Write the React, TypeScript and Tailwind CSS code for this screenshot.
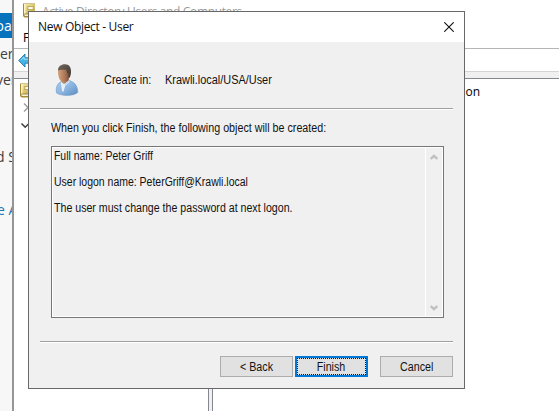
import type { ReactNode } from "react";

const dialogFont = "font-['Liberation_Sans',Arial,sans-serif]";
const systemFont = "font-['Open_Sans','Noto_Sans',sans-serif]";

function BookIcon() {
  return (
    <svg width="12" height="15" viewBox="0 0 12 15" className="shrink-0">
      <defs>
        <linearGradient id="cover" x1="0" x2="1" y1="0" y2="1">
          <stop offset="0" stopColor="#f6ebab" />
          <stop offset="1" stopColor="#c3a743" />
        </linearGradient>
      </defs>
      <path d="M0 .5H12V14.500H1.500L0 13Z" fill="#a58a35" />
      <rect x="1" y="1" width="11" height="9.500" fill="url(#cover)" />
      <rect x="1" y="1" width="1.500" height="9.500" fill="#fbf4c4" />
      <rect x="4.500" y="3" width="6" height="4" fill="#b2983f" />
      <rect x="5.300" y="3.800" width="4.500" height="2.400" fill="#fffdf0" />
      <path d="M1 11.500H10.500V13H2Z" fill="#f5f0dc" />
    </svg>
  );
}

function PersonIcon() {
  return (
    <svg width="26" height="34" viewBox="0 0 26 34" className="shrink-0">
      <defs>
        <linearGradient id="shirt" x1="0" x2="1" y1="0" y2="1">
          <stop offset="0" stopColor="#a9cbec" />
          <stop offset=".5" stopColor="#8db6e0" />
          <stop offset="1" stopColor="#5a8cc0" />
        </linearGradient>
        <linearGradient id="skin" x1="0" x2="1">
          <stop offset="0" stopColor="#d6a27b" />
          <stop offset=".6" stopColor="#a87353" />
          <stop offset="1" stopColor="#70452e" />
        </linearGradient>
        <linearGradient id="hair" x1="0" x2="1" y1="0" y2="1">
          <stop offset="0" stopColor="#75685c" />
          <stop offset="1" stopColor="#3a3430" />
        </linearGradient>
      </defs>
      <path d="M2.500 30C1.800 26 2.500 21 6.500 19L9 17.500H15.500L19.500 19.500C22.800 21.800 24 27 23.700 29.500C20 33 8 33.500 2.500 30Z" fill="url(#shirt)" stroke="#6c98c6" strokeWidth=".6" />
      <path d="M6.800 19.200L8 28L9.300 29L11.500 22L9.500 18Z" fill="#e6f0fa" />
      <path d="M7 15H14.500L15 18L10 21L7 19Z" fill="url(#skin)" />
      <path d="M14.800 17L16 18.800L12 22.500L10.300 21Z" fill="#c5dcf2" />
      <path d="M4.200 6C3.600 10 4.300 17 8 18.500C12.500 19.300 15.500 15.500 16.200 11L15.500 5Z" fill="url(#skin)" />
      <path d="M4 7.500C4 3.500 7 1.300 11 1.300C15.300 1.300 17.300 4.500 17 9.500C16.600 13 15.800 15 14.800 15L14.300 10.500C12.500 10.500 12.800 7.500 12 6.500C9.500 7.500 6.500 6 4 7.500Z" fill="url(#hair)" />
    </svg>
  );
}

function ScrollArrow({ down = false }: { down?: boolean }) {
  return (
    <svg width="8" height="7" viewBox="0 0 8 7" className={down ? "rotate-180" : ""}>
      <path d="M.7 5L4 1.900L7.300 5" fill="none" stroke="#bfbfbf" strokeWidth="2.400" />
    </svg>
  );
}

function DialogButton({ children, focused = false }: { children: ReactNode; focused?: boolean }) {
  return (
    <button
      className={`flex h-[21px] w-[73px] items-center justify-center bg-[#e1e1e1] ${
        focused ? "border-2 border-[#0078d7] p-0" : "border border-[#adadad]"
      }`}
    >
      <span
        className={`flex items-center justify-center whitespace-pre ${
          focused ? "h-full w-full border border-dotted border-[#101820]" : ""
        }`}
      >
        <span className="scale-x-[0.89]">{children}</span>
      </span>
    </button>
  );
}

function Separator() {
  return <div className="mx-[11px] h-[2px] border-t border-[#a0a0a0] bg-white" />;
}

function ServerManager() {
  return (
    <aside className={`flex h-full w-3 shrink-0 flex-col overflow-hidden whitespace-pre bg-[#f7f7f7] pt-[13px] text-[14px] leading-[26px] text-[#404040] ${systemFont}`}>
      <div className="h-[25px] bg-[#0873bd] text-white">
        <span className="-ml-[4.5px]">oar</span>
      </div>
      <div className="mt-[3px] h-[26px]">er</div>
      <div className="-ml-[4px] h-[26px]">ver</div>
      <div className="-ml-[4px] mt-[51px] h-[26px]">d S</div>
      <div className="-ml-[3px] mt-[27px] h-[26px] text-[#1c78b5]">e A</div>
    </aside>
  );
}

function DirectoryWindow() {
  return (
    <main className={`flex min-w-0 grow flex-col border-l-2 border-[#969696] bg-white text-[12px] text-black ${systemFont}`}>
      <header className="flex h-6 items-start gap-[7px] pl-[9px] pt-[3px] text-[#999]">
        <BookIcon />
        <span className="whitespace-nowrap leading-[17px] tracking-[-0.36px]">Active Directory Users and Computers</span>
      </header>
      <nav className="flex h-6 items-center pl-[9px] pt-[3px] text-[12px]">File</nav>
      <div className="flex h-[23px] items-center justify-between border-t border-[#b5b5b5] pl-1">
        <svg width="14" height="15" viewBox="0 0 14 15">
          <path d="M.7 7.500L7 1V4.800H14V10.200H7V14Z" fill="#42b4e8" stroke="#2176aa" strokeWidth=".9" />
          <path d="M3 7.200L6 4V6.200H13" fill="none" stroke="#a0e1fa" />
        </svg>
      </div>
      <div className="h-[7px] border-t border-[#d4d4d4] bg-[#f0f0f0]" />
      <div className="flex grow border-t border-[#828790]">
        <section className="w-[195px] shrink-0 border-r border-[#828790] pl-[6px] pt-1">
          <BookIcon />
          <svg width="12" height="28" viewBox="0 0 12 28" className="mt-1" fill="none">
            <path d="M4 1.500L8 5.500L4 9.500" stroke="#a0a0a0" strokeWidth="1.500" />
            <path d="M1.500 21.500L5.200 25.200L9 21.500" stroke="#404040" strokeWidth="1.600" />
          </svg>
        </section>
        <div className="w-[3px] shrink-0 bg-[#f0f0f0]" />
        <section className="grow border-l border-[#828790] pl-[203px] pt-1">
          <span className="text-[12px] leading-[17px]">Description</span>
        </section>
      </div>
    </main>
  );
}

function NewUserDialog() {
  return (
    <div
      role="dialog"
      className={`absolute left-[28px] top-[11px] flex h-[378px] w-[437px] flex-col border border-[#686868] bg-[#f0f0f0] text-[12px] leading-[14px] text-[#111] ${dialogFont}`}
    >
      <header className={`flex h-[30px] items-center justify-between bg-white pl-[9px] pr-[10px] ${systemFont}`}>
        <h1 className="whitespace-nowrap text-[12px] tracking-[-0.32px]">New Object - User</h1>
        <svg width="10" height="10" viewBox="0 0 10 10">
          <path d="M.3 .3L9.700 9.700M9.700 .3L.3 9.700" stroke="#111" strokeWidth="1.100" />
        </svg>
      </header>
      <div className="flex h-[66px] items-start pl-[25px] pt-[21px]">
        <PersonIcon />
        <div className="ml-[24px] mt-[10px] w-[61px] origin-left scale-x-[0.91] whitespace-nowrap">Create in:</div>
        <div className="mt-[10px] origin-left scale-x-[0.91] whitespace-nowrap">Krawli.local/USA/User</div>
      </div>
      <Separator />
      <p className="ml-[22px] mt-[11px] origin-left scale-x-[0.893] whitespace-nowrap">
        When you click Finish, the following object will be created:
      </p>
      <div className="ml-[22px] mt-[11px] flex h-[172px] w-[393px] border border-[#767676] shadow-[inset_0_0_0_1px_#fff]">
        <div className="grow whitespace-nowrap pl-[2px] pt-[2px]">
          <p className="origin-left scale-x-[0.868]">Full name: Peter Griff</p>
          <p className="mt-3 origin-left scale-x-[0.873]">User logon name: PeterGriff@Krawli.local</p>
          <p className="mt-3 origin-left scale-x-[0.885]">The user must change the password at next logon.</p>
        </div>
        <div className="flex w-[18px] flex-col items-center justify-between border-l border-white pb-[6px] pr-[2px] pt-[7px]">
          <ScrollArrow />
          <ScrollArrow down />
        </div>
      </div>
      <div className="h-[23px]" />
      <Separator />
      <footer className="mt-[13px] flex pl-[191px]">
        <DialogButton>{"< Back"}</DialogButton>
        <div className="ml-[2px]">
          <DialogButton focused>Finish</DialogButton>
        </div>
        <div className="ml-[12px]">
          <DialogButton>Cancel</DialogButton>
        </div>
      </footer>
    </div>
  );
}

export default function App() {
  return (
    <div className="relative flex h-[411px] w-[559px] overflow-hidden bg-white">
      <ServerManager />
      <DirectoryWindow />
      <NewUserDialog />
    </div>
  );
}
